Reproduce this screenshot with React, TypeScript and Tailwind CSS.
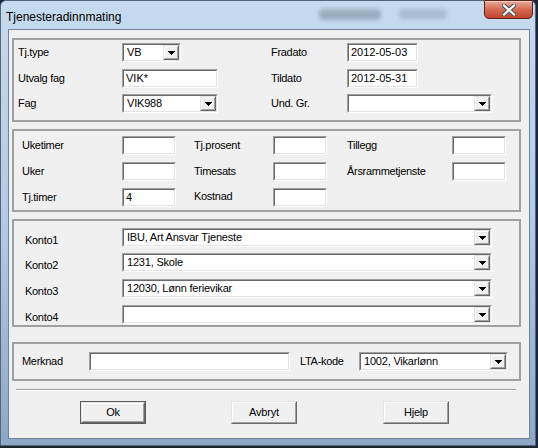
import React from "react";

const sunkenOuter = "border border-t-[#a0a0a0] border-l-[#a0a0a0] border-r-white border-b-white";
const sunkenInner = "border border-t-[#696969] border-l-[#696969] border-r-[#e3e3e3] border-b-[#e3e3e3]";
const raisedOuter = "border border-t-[#e3e3e3] border-l-[#e3e3e3] border-r-[#696969] border-b-[#696969]";
const raisedInner = "border border-t-white border-l-white border-r-[#a0a0a0] border-b-[#a0a0a0]";

function Edit({ className = "", value = "" }: { className?: string; value?: string }) {
  return (
    <div className={`h-[19px] shrink-0 ${sunkenOuter} ${className}`}>
      <div className={`h-full bg-white ${sunkenInner} flex items-center pl-[2px] leading-none whitespace-nowrap overflow-hidden`}>
        {value}
      </div>
    </div>
  );
}

function Arrow() {
  return (
    <svg width="7" height="4" viewBox="0 0 7 4" shapeRendering="crispEdges" className="mt-[1px]">
      <rect x="0" y="0" width="7" height="1" fill="#000" />
      <rect x="1" y="1" width="5" height="1" fill="#000" />
      <rect x="2" y="2" width="3" height="1" fill="#000" />
      <rect x="3" y="3" width="1" height="1" fill="#000" />
    </svg>
  );
}

function Combo({ className = "", value = "" }: { className?: string; value?: string }) {
  return (
    <div className={`h-[19px] shrink-0 ${sunkenOuter} ${className}`}>
      <div className={`h-full bg-white ${sunkenInner} flex`}>
        <div className="flex-1 flex items-center pl-[3px] leading-none whitespace-nowrap overflow-hidden tracking-[-0.2px]">{value}</div>
        <div className={`w-[16px] h-full bg-[#f0f0f0] ${raisedOuter}`}>
          <div className={`h-full ${raisedInner} flex items-center justify-center`}>
            <Arrow />
          </div>
        </div>
      </div>
    </div>
  );
}

function Label({ className = "", children }: { className?: string; children: React.ReactNode }) {
  return <div className={`shrink-0 leading-none whitespace-nowrap tracking-[-0.3px] ${className}`}>{children}</div>;
}

function Group({ className = "", children }: { className?: string; children: React.ReactNode }) {
  return <div className={`border-2 border-[#a0a0a0] ${className}`}>{children}</div>;
}

function Btn({ label, isDefault = false, className = "" }: { label: string; isDefault?: boolean; className?: string }) {
  return (
    <div className={`w-[66px] h-[23px] shrink-0 ${isDefault ? "border border-[#5a5a5a]" : ""} ${className}`}>
      <div className={`h-full bg-[#f0f0f0] ${raisedOuter}`}>
        <div className={`h-full ${raisedInner} flex items-center justify-center leading-none tracking-[-0.2px]`}>{label}</div>
      </div>
    </div>
  );
}

export default function App() {
  return (
    <div className="w-[538px] h-[448px] bg-[#1d2631] overflow-hidden font-['Liberation_Sans',Arial,sans-serif] text-[11px] text-black">
      <div className="w-[536px] h-[446px] rounded-t-[6px] border border-[#52657c] bg-gradient-to-b from-[#c6daef] via-[#b3cae4] to-[#8ea7c5] flex flex-col">
        {/* title bar */}
        <div className="relative h-[28px] shrink-0 flex items-center pl-[5px] pt-[4px] text-[12px]">
          <div className="absolute left-[318px] top-[8px] w-[62px] h-[11px] rounded-sm bg-[#6f8091] opacity-50 blur-[2px]" />
          <div className="absolute left-[398px] top-[8px] w-[48px] h-[10px] rounded-sm bg-[#7f8fa0] opacity-40 blur-[2px]" />
          <span className="relative text-black">Tjenesteradinnmating</span>
          <div className="absolute right-[2px] top-[-1px] w-[49px] h-[19px] rounded-b-[5px] border border-[#5e2218] bg-gradient-to-b from-[#e9aa9a] via-[#d26a52] to-[#c3432b] flex items-center justify-center shadow-[inset_0_1px_0_rgba(255,255,255,0.45)]">
            <svg width="14" height="12" viewBox="0 0 14 12">
              <path d="M2 1.5 L12 10.5 M12 1.5 L2 10.5" stroke="#4a4f57" strokeWidth="4.2" strokeLinecap="square" />
              <path d="M2 1.5 L12 10.5 M12 1.5 L2 10.5" stroke="#ffffff" strokeWidth="2.2" strokeLinecap="square" />
            </svg>
          </div>
        </div>

        {/* client area */}
        <div className="flex-1 ml-[7px] mr-[5px] mb-[6px] border border-[#6f839c] bg-[#f0f0f0] flex flex-col pl-[3px] pr-[8px]">
          {/* group 1 */}
          <Group className="mt-[8px] h-[84px] pt-[3px] pl-[4px] flex flex-col">
            <div className="flex items-center">
              <Label className="w-[104px]">Tj.type</Label>
              <div className="w-[149px] shrink-0"><Combo className="w-[59px]" value="VB" /></div>
              <Label className="w-[76px]">Fradato</Label>
              <Edit className="w-[71px]" value="2012-05-03" />
            </div>
            <div className="flex items-center mt-[7px]">
              <Label className="w-[104px]">Utvalg fag</Label>
              <div className="w-[149px] shrink-0"><Edit className="w-[96px]" value="VIK*" /></div>
              <Label className="w-[76px]">Tildato</Label>
              <Edit className="w-[71px]" value="2012-05-31" />
            </div>
            <div className="flex items-center mt-[6px]">
              <Label className="w-[104px]">Fag</Label>
              <div className="w-[149px] shrink-0"><Combo className="w-[96px]" value="VIK988" /></div>
              <Label className="w-[76px]">Und. Gr.</Label>
              <Combo className="w-[145px]" />
            </div>
          </Group>

          {/* group 2 */}
          <Group className="mt-[7px] h-[83px] pt-[5px] pl-[8px] flex flex-col gap-[7px]">
            <div className="flex items-center">
              <Label className="w-[100px]">Uketimer</Label>
              <Edit className="w-[54px]" />
              <div className="w-[18px] shrink-0" />
              <Label className="w-[79px]">Tj.prosent</Label>
              <Edit className="w-[54px]" />
              <div className="w-[20px] shrink-0" />
              <Label className="w-[105px]">Tillegg</Label>
              <Edit className="w-[54px]" />
            </div>
            <div className="flex items-center">
              <Label className="w-[100px]">Uker</Label>
              <Edit className="w-[54px]" />
              <div className="w-[18px] shrink-0" />
              <Label className="w-[79px]">Timesats</Label>
              <Edit className="w-[54px]" />
              <div className="w-[20px] shrink-0" />
              <Label className="w-[105px]">Årsrammetjenste</Label>
              <Edit className="w-[54px]" />
            </div>
            <div className="flex items-center">
              <Label className="w-[100px]">Tj.timer</Label>
              <Edit className="w-[54px]" value="4" />
              <div className="w-[18px] shrink-0" />
              <Label className="w-[79px] pb-[3px]">Kostnad</Label>
              <Edit className="w-[54px]" />
            </div>
          </Group>

          {/* group 3 */}
          <Group className="mt-[7px] h-[108px] pt-[7px] pl-[11px] flex flex-col">
            <div className="flex items-center">
              <Label className="w-[97px] pt-[6px]">Konto1</Label>
              <Combo className="w-[370px]" value="IBU, Art Ansvar Tjeneste" />
            </div>
            <div className="flex items-center mt-[6px]">
              <Label className="w-[97px] pt-[6px]">Konto2</Label>
              <Combo className="w-[370px]" value="1231, Skole" />
            </div>
            <div className="flex items-center mt-[7px]">
              <Label className="w-[97px] pt-[6px]">Konto3</Label>
              <Combo className="w-[370px]" value="12030, Lønn ferievikar" />
            </div>
            <div className="flex items-center mt-[7px]">
              <Label className="w-[97px] pt-[6px]">Konto4</Label>
              <Combo className="w-[370px]" />
            </div>
          </Group>

          {/* group 4 */}
          <Group className="mt-[15px] h-[39px] pt-[8px] pl-[8px]">
            <div className="flex items-center">
              <Label className="w-[67px]">Merknad</Label>
              <Edit className="w-[201px]" />
              <div className="w-[10px] shrink-0" />
              <Label className="w-[59px]">LTA-kode</Label>
              <Combo className="w-[149px]" value="1002, Vikarlønn" />
            </div>
          </Group>

          {/* separator */}
          <div className="mt-[8px] ml-[4px] w-[500px] h-[2px] border-t border-t-[#a0a0a0] border-b border-b-white" />

          {/* buttons */}
          <div className="mt-[10px] flex">
            <Btn label="Ok" isDefault className="ml-[68px]" />
            <Btn label="Avbryt" className="ml-[85px]" />
            <Btn label="Hjelp" className="ml-[86px]" />
          </div>
        </div>
      </div>
    </div>
  );
}
